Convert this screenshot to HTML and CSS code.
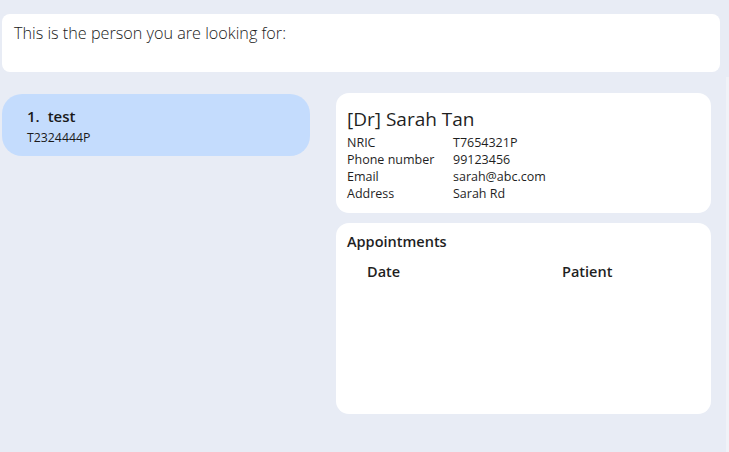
FILE: index.html
```html
<!DOCTYPE html>
<html>
<head>
<meta charset="utf-8">
<link rel="stylesheet" href="styles.css">
</head>
<body>
<div class="page">
  <div class="result">This is the person you are looking for:</div>
  <div class="main">
    <div class="list">
      <div class="person-card">
        <div class="person-name"><span class="idx">1.</span>test</div>
        <div class="person-id">T2324444P</div>
      </div>
    </div>
    <div class="detail">
      <div class="card info">
        <div class="doc-name">[Dr] Sarah Tan</div>
        <div class="fields">
          <div class="label">NRIC</div><div class="value">T7654321P</div>
          <div class="label">Phone number</div><div class="value">99123456</div>
          <div class="label">Email</div><div class="value">sarah@abc.com</div>
          <div class="label">Address</div><div class="value">Sarah Rd</div>
        </div>
      </div>
      <div class="card appts">
        <div class="appts-title">Appointments</div>
        <div class="appts-head">
          <div class="col-date">Date</div>
          <div class="col-patient">Patient</div>
        </div>
      </div>
    </div>
    <div class="spacer"></div>
    <div class="strip"></div>
  </div>
</div>
</body>
</html>
```
FILE: styles.css
```css
html, body {
  margin: 0;
  padding: 0;
  background: #e8ecf5;
  font-family: "Open Sans", "Noto Sans", sans-serif;
  color: #1f1f1f;
}
.page {
  width: 729px;
  height: 452px;
  padding-top: 14px;
  box-sizing: border-box;
  display: flex;
  flex-direction: column;
}
.result {
  margin-left: 2px;
  width: 718px;
  height: 58px;
  box-sizing: border-box;
  background: #ffffff;
  border-radius: 8px;
  padding: 8px 12px;
  font-weight: 300;
  font-size: 16.2px;
  line-height: 22px;
  color: #202020;
}
.main {
  margin-top: 5px;
  flex: 1;
  display: flex;
}
.list {
  width: 308px;
  margin-left: 2px;
  padding-top: 17px;
}
.person-card {
  height: 62px;
  box-sizing: border-box;
  background: #c4dcfd;
  border-radius: 20px;
  padding: 12px 25px;
}
.person-name {
  font-weight: 600;
  font-size: 15px;
  line-height: 20px;
  color: #1a1a1a;
}
.idx {
  margin-right: 8px;
}
.person-id {
  margin-top: 3px;
  font-size: 12.3px;
  line-height: 17px;
  color: #1a1a1a;
}
.detail {
  margin-left: 26px;
  width: 375px;
  padding-top: 16px;
  display: flex;
  flex-direction: column;
  gap: 10px;
}
.card {
  background: #ffffff;
  border-radius: 13px;
  box-sizing: border-box;
}
.info {
  height: 120px;
  padding: 13px 11px;
}
.doc-name {
  font-size: 19px;
  line-height: 26px;
  margin-bottom: 2px;
  color: #1f1f1f;
}
.fields {
  display: grid;
  grid-template-columns: 106px 1fr;
  font-size: 12.5px;
  line-height: 17px;
  color: #1f1f1f;
}
.appts {
  height: 191px;
  padding: 9px 11px;
}
.appts-title {
  font-weight: 600;
  font-size: 14.5px;
  line-height: 20px;
}
.appts-head {
  display: grid;
  grid-template-columns: 195px 1fr;
  padding-left: 20px;
  margin-top: 10px;
  font-weight: 600;
  font-size: 14.5px;
  line-height: 20px;
}
.spacer {
  flex: 1;
}
.strip {
  width: 3px;
  background: #f0f2f7;
}
```
